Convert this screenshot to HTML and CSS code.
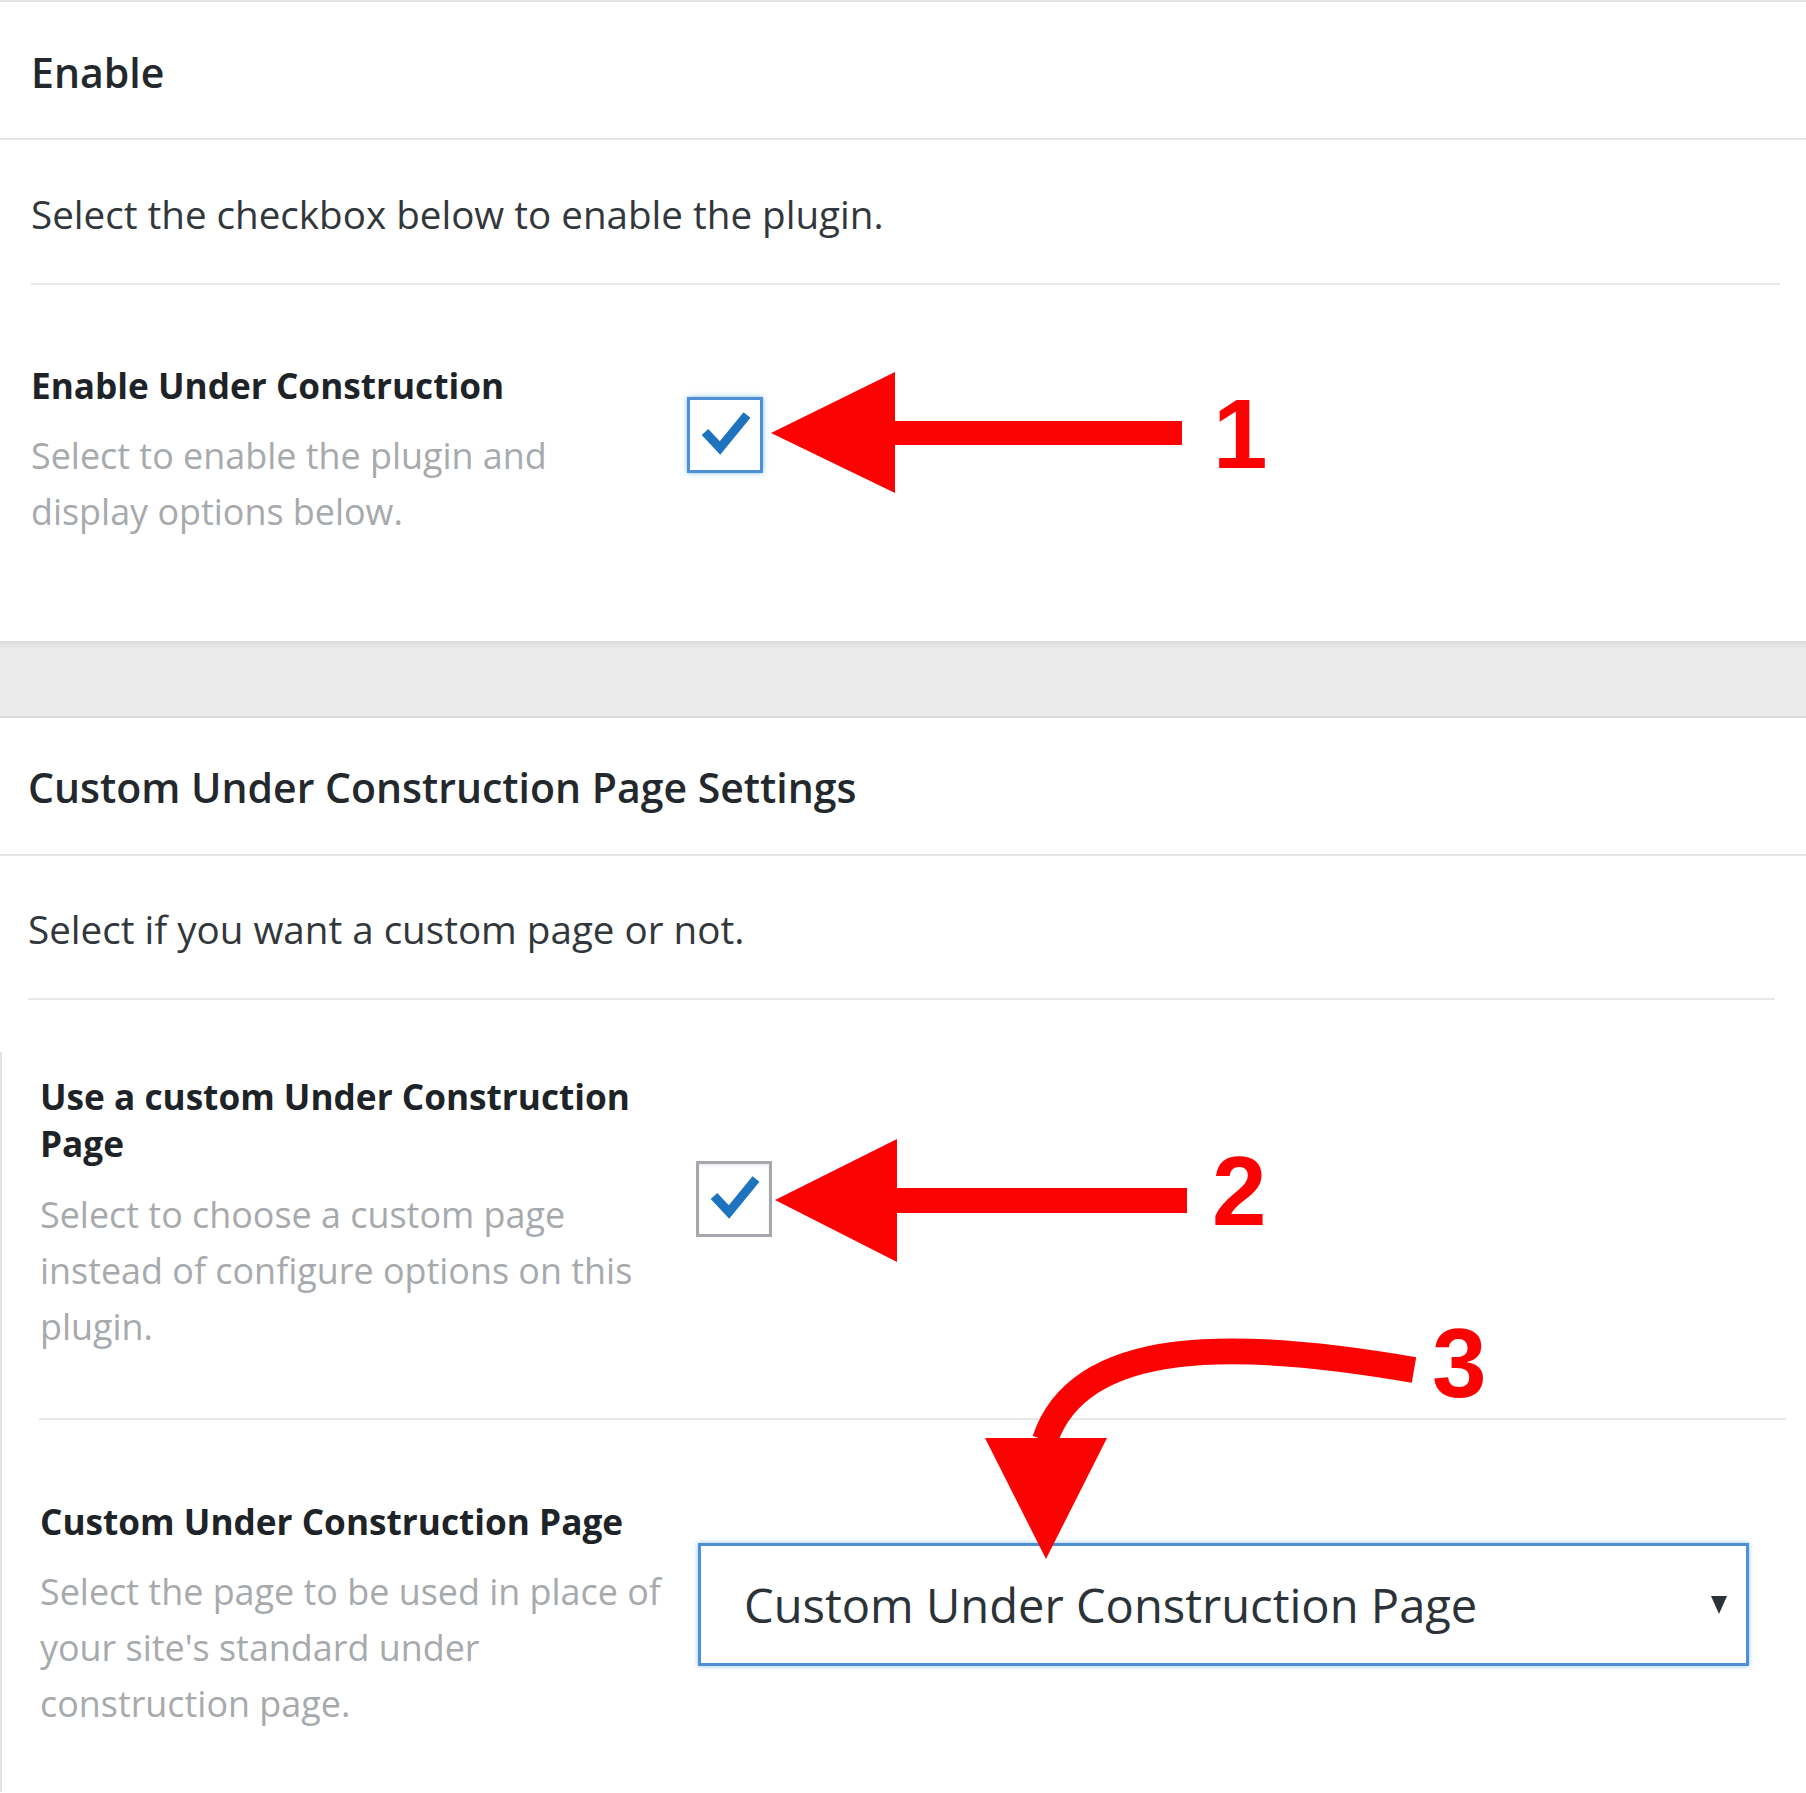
FILE: index.html
```html
<!DOCTYPE html>
<html lang="en">
<head>
<meta charset="utf-8">
<title>Under Construction Settings</title>
<link rel="stylesheet" href="styles.css">
</head>
<body>
<section class="card card-enable">
  <header class="card-head"><h2 class="card-title">Enable</h2></header>
  <div class="card-body body-enable">
    <p class="intro">Select the checkbox below to enable the plugin.</p>
    <div class="row row-enable">
      <div class="label-col">
        <div class="label">Enable Under Construction</div>
        <div class="desc">Select to enable the plugin and<br>display options below.</div>
      </div>
      <span class="checkbox is-focus">
        <svg class="check" viewBox="0 0 70 70" width="70" height="70"><polyline points="15,32 30,48 57,15" /></svg>
      </span>
    </div>
  </div>
</section>

<div class="band"></div>

<section class="card card-custom">
  <header class="card-head"><h2 class="card-title">Custom Under Construction Page Settings</h2></header>
  <div class="card-body body-custom">
    <p class="intro">Select if you want a custom page or not.</p>
  </div>
  <div class="subsection">
    <div class="row row-use">
      <div class="label-col">
        <div class="label">Use a custom Under Construction<br>Page</div>
        <div class="desc">Select to choose a custom page<br>instead of configure options on this<br>plugin.</div>
      </div>
      <span class="checkbox">
        <svg class="check" viewBox="0 0 70 70" width="70" height="70"><polyline points="15,32 30,48 57,15" /></svg>
      </span>
    </div>
    <div class="row row-page">
      <div class="label-col">
        <div class="label">Custom Under Construction Page</div>
        <div class="desc">Select the page to be used in place of<br>your site's standard under<br>construction page.</div>
      </div>
      <div class="select-box">
        <span class="select-value">Custom Under Construction Page</span>
        <svg class="select-caret" viewBox="0 0 18 18" width="18" height="18"><polygon points="1,0 17,0 9,18" /></svg>
      </div>
    </div>
  </div>
</section>

<svg class="annotations" viewBox="0 0 1806 1793" width="1806" height="1793" aria-hidden="true">
  <polygon class="red" points="771,433 895,372 895,421 1182,421 1182,445 895,445 895,493" />
  <text class="num" x="1213" y="468">1</text>
  <polygon class="red" points="775,1200 897,1139 897,1188 1187,1188 1187,1213 897,1213 897,1262" />
  <text class="num" x="1212" y="1225">2</text>
  <path class="curve" d="M1414,1370 C1240,1340 1080,1335 1045,1440" />
  <polygon class="red" points="985,1438 1107,1438 1046,1559" />
  <text class="num" x="1432" y="1397">3</text>
</svg>
</body>
</html>
```

FILE: styles.css
```css
html, body {
  margin: 0;
  padding: 0;
  background: #ffffff;
}

body {
  width: 1806px;
  font-family: "Open Sans", "Noto Sans", "DejaVu Sans", sans-serif;
  color: #32373c;
  overflow: hidden;
}

.card {
  background: #ffffff;
}

.card-enable {
  border-top: 2px solid #e4e4e4;
}

.card-custom {
  border-top: 2px solid #dcdcdc;
}

.card-head {
  padding: 42px 31px 38px;
  border-bottom: 2px solid #e6e6e6;
}

.card-custom .card-head {
  padding: 41px 28px 39px;
}

.card-title {
  margin: 0;
  font-size: 41px;
  line-height: 56px;
  font-weight: 600;
  color: #23282d;
}

.card-body {
  padding: 0 26px 0 31px;
}

.body-custom {
  padding: 0 31px 0 28px;
}

.intro {
  margin: 0;
  padding: 45px 0 41px;
  font-size: 38.6px;
  line-height: 56px;
  border-bottom: 2px solid #e8e8e8;
  color: #32373c;
}

.body-enable .intro {
  padding-top: 46px;
}

.row {
  display: flex;
  align-items: center;
}

.row-enable {
  padding: 77px 0 101px;
}

.label-col {
  width: 656px;
  flex: none;
}

.label {
  font-size: 35.2px;
  line-height: 47px;
  font-weight: 700;
  color: #1d2327;
}

.desc {
  margin-top: 19px;
  font-size: 35.9px;
  line-height: 56px;
  color: #a7aaad;
}

.row-use .desc {
  margin-top: 20px;
}

.checkbox {
  display: flex;
  align-items: center;
  justify-content: center;
  box-sizing: border-box;
  width: 76px;
  height: 76px;
  flex: none;
  margin-bottom: 30px;
  border: 3px solid #a5a9ad;
  background: #ffffff;
  box-shadow: inset 0 2px 3px rgba(0, 0, 0, 0.08);
}

.checkbox.is-focus {
  border-color: #4f8fd6;
  box-shadow: 0 0 5px rgba(30, 140, 220, 0.55);
  margin-bottom: 32px;
}

.check {
  display: block;
}

.check polyline {
  fill: none;
  stroke: #1e73be;
  stroke-width: 9;
  stroke-linejoin: miter;
  stroke-linecap: butt;
}

.band {
  height: 75px;
  background: linear-gradient(to bottom, #dcdcdc 0, #e6e6e6 5px, #ebebeb 8px, #ebebeb 100%);
}

.subsection {
  margin-top: 52px;
  border-left: 2px solid #e4e4e4;
}

.row-use {
  padding: 21px 0 63px 1px;
  margin: 0 20px 0 37px;
  border-bottom: 2px solid #e8e8e8;
}

.row-page {
  padding: 78px 0 60px 38px;
}

.select-box {
  display: flex;
  align-items: center;
  justify-content: space-between;
  box-sizing: border-box;
  width: 1051px;
  height: 123px;
  margin-left: 2px;
  margin-bottom: 21px;
  padding: 0 18px 0 43px;
  border: 3px solid #4f8fd6;
  box-shadow: 0 0 5px rgba(30, 140, 220, 0.5);
  background: #ffffff;
}

.select-value {
  font-size: 47.1px;
  line-height: 64px;
  color: #2c3338;
}

.select-caret polygon {
  fill: #2c3338;
}

.annotations {
  position: absolute;
  top: 0;
  left: 0;
  pointer-events: none;
}

.red {
  fill: #fc0303;
}

.curve {
  fill: none;
  stroke: #fc0303;
  stroke-width: 26;
  stroke-linecap: butt;
}

.num {
  fill: #fc0303;
  font-family: "Liberation Sans", Arial, sans-serif;
  font-weight: 700;
  font-size: 98px;
}
```
